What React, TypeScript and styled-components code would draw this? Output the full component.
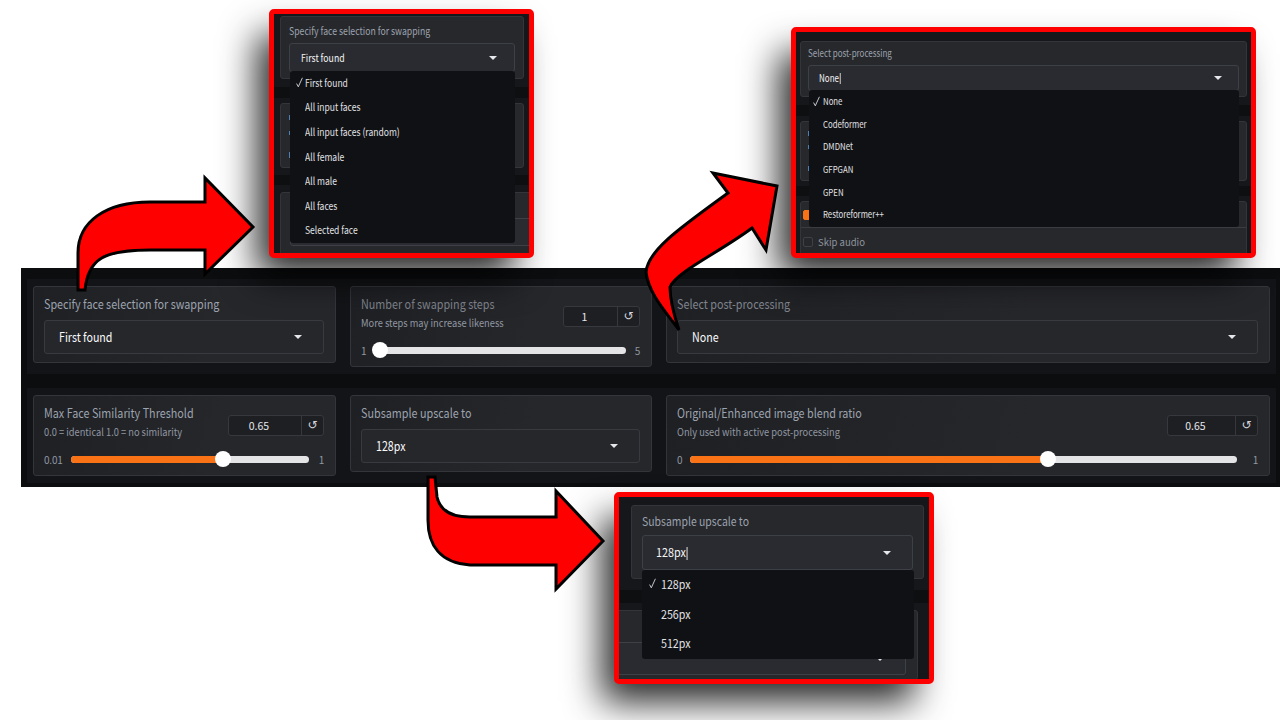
import React from 'react';
import styled, { createGlobalStyle } from 'styled-components';

const GlobalStyle = createGlobalStyle`
  html, body {
    margin: 0;
    padding: 0;
    background: #fff;
  }
  body {
    font-family: 'Noto Sans CJK SC', 'Noto Sans', sans-serif;
  }
`;

const ARROWS = [
  // left, swap selection
  'M78 290 L78 253 C78 222 105 202 150 202 L205 202 L205 178 L253 227 L205 274 L205 250 L150 250 C105 250 88 258 85 290 Z',
  // right, post-processing
  'M679 330 C664 310 648 292 646 272 C648 250 680 228 728 193 L713 173 L777 186 L766 250 L752 228 C720 252 676 272 670 287 C670 300 674 315 679 330 Z',
  // bottom, upscale
  'M428 477 L435 477 L437 497 C440 510 450 517 470 517 L556 517 L556 491 L603 541 L556 589 L556 565 L470 565 C440 563 428 545 428 520 Z',
];

const MenuOptions = ({ options, rowH, size, pl, slot, sx, pb }: {
  options: string[];
  rowH: number;
  size: number;
  pl: number;
  slot: number;
  sx: number;
  pb?: number;
}) => (
  <>
    {options.map((o, i) => (
      <MenuItem key={o} $rowH={rowH} $size={size} $pl={pl} $slot={slot} $pb={pb}>
        <span>
          {i === 0 && (
            <CheckIcon viewBox="0 0 7 11">
              <path d="M0.6 6.6 L2.3 9.8 L6.4 0.8" fill="none" stroke="#d8dade" strokeWidth="0.9" />
            </CheckIcon>
          )}
        </span>
        <Squeezed $sx={sx}>{o}</Squeezed>
      </MenuItem>
    ))}
  </>
);

const App = () => {
  return (
    <Page>
      <GlobalStyle />
      <Panel>
        <Band>
          <Card>
            <Label>Specify face selection for swapping</Label>
            <Select value="First found" />
          </Card>
          <SliderCard
            label="Number of swapping steps"
            hint="More steps may increase likeness"
            value="1"
            min="1"
            max="5"
            pct={2}
            boxWidth={77}
            trackEnd={1}
            dim
          />
          <Card>
            <Label $dim>Select post-processing</Label>
            <Select value="None" />
          </Card>
        </Band>
        <Band>
          <SliderCard
            label="Max Face Similarity Threshold"
            hint="0.0 = identical 1.0 = no similarity"
            value="0.65"
            min="0.01"
            max="1"
            pct={63.5}
            boxWidth={96}
            trackEnd={2}
          />
          <Card>
            <Label>Subsample upscale to</Label>
            <Select value="128px" />
          </Card>
          <SliderCard
            label="Original/Enhanced image blend ratio"
            hint="Only used with active post-processing"
            value="0.65"
            min="0"
            max="1"
            pct={65.3}
            boxWidth={91}
            trackEnd={8}
          />
        </Band>
      </Panel>

      <Callout $x={269} $y={9} $w={265} $h={249}>
        <PeekCard $mt={2} $h={63} $pad={8} $pt={5}>
          <PeekLabel $size={11} $sx={0.79}>Specify face selection for swapping</PeekLabel>
          <PeekSelect $size={11} $h={29} $mt={5} $pl={11}>
            <Squeezed $sx={0.79}>First found</Squeezed>
            <Caret $x={17} />
          </PeekSelect>
        </PeekCard>
        <PeekGap $mt={8} $h={11} />
        <PeekCard $mt={5} $h={65} $pad={9} $pt={5} />
        <PeekGap $mt={7} $h={10} />
        <PeekCard $mt={7} $h={70} $pad={9} $pt={5} $mr={-20}>
          <PeekLabel $size={11} $sx={0.79} />
          <PeekSelect $size={11} $h={28} $mt={4} $pl={11} />
        </PeekCard>
        <PeekTick $x={15} $y={101} $h={5} />
        <PeekTick $x={15} $y={117} $h={4} />
        <PeekTick $x={15} $y={138} $h={6} />
        <Menu $x={16} $y={57} $w={225} $h={172}>
          <MenuOptions
            options={['First found', 'All input faces', 'All input faces (random)', 'All female', 'All male', 'All faces', 'Selected face']}
            rowH={24.6}
            size={10.5}
            pl={6}
            slot={9}
            sx={0.815}
            pb={2}
          />
        </Menu>
      </Callout>

      <Callout $x={791} $y={27} $w={465} $h={231}>
        <PeekCard $mt={9} $h={56} $pad={7} $pt={3} $ml={4} $mr={4}>
          <PeekLabel $size={10} $sx={0.8}>Select post-processing</PeekLabel>
          <PeekSelect $size={10} $h={26} $mt={4} $pl={10}>
            <Squeezed $sx={0.8}>
              None
              <Cursor $h={11} />
            </Squeezed>
            <Caret $x={16} />
          </PeekSelect>
        </PeekCard>
        <PeekGap $mt={8} $h={11} />
        <PeekCard $mt={5} $h={60} $pad={8} $pt={5} $ml={4} $mr={4} />
        <PeekGap $mt={5} $h={10} />
        <PeekCard $mt={5} $h={60} $pad={0} $pt={0} $ml={4} $mr={4}>
          <CheckRow $h={25}>
            <CheckBox $on />
          </CheckRow>
          <CheckRow $h={27} $divided>
            <CheckBox />
            <CheckText>Skip audio</CheckText>
          </CheckRow>
        </PeekCard>
        <PeekTick $x={12} $y={99} $h={5} />
        <PeekTick $x={12} $y={113} $h={4} />
        <PeekTick $x={12} $y={134} $h={5} />
        <Menu $x={13} $y={58} $w={430} $h={137}>
          <MenuOptions
            options={['None', 'Codeformer', 'DMDNet', 'GFPGAN', 'GPEN', 'Restoreformer++']}
            rowH={22.6}
            size={9.5}
            pl={4}
            slot={10}
            sx={0.82}
          />
        </Menu>
      </Callout>

      <Callout $x={614} $y={492} $w={320} $h={192}>
        <PeekCard $mt={8} $h={74} $pad={10} $pt={7} $ml={12} $mr={5}>
          <PeekLabel $size={12} $sx={0.87}>Subsample upscale to</PeekLabel>
          <PeekSelect $size={12} $h={35} $mt={6} $pl={13}>
            <Squeezed $sx={0.9}>
              128px
              <Cursor $h={13} />
            </Squeezed>
            <Caret $x={21} />
          </PeekSelect>
        </PeekCard>
        <PeekGap $mt={11} $h={13} />
        <PeekCard $mt={7} $h={70} $pad={11} $pt={7} $ml={-14} $mr={11}>
          <PeekLabel $size={12} $sx={0.87} />
          <PeekSelect $size={12} $h={33} $mt={8} $pl={14}>
            <Caret $x={21} />
          </PeekSelect>
        </PeekCard>
        <Menu $x={23} $y={73} $w={272} $h={89}>
          <MenuOptions
            options={['128px', '256px', '512px']}
            rowH={29.7}
            size={11.5}
            pl={7}
            slot={12}
            sx={0.93}
            pb={2}
          />
        </Menu>
      </Callout>

      <ArrowLayer viewBox="0 0 1280 720">
        {ARROWS.map((d) => (
          <path key={d} d={d} fill="#ff0000" stroke="#000" strokeWidth="3" strokeLinejoin="miter" />
        ))}
      </ArrowLayer>
    </Page>
  );
};

const Select = ({ value }: { value: string }) => (
  <SelectBox>
    <Squeezed $sx={0.82}>{value}</Squeezed>
    <Caret $x={21} />
  </SelectBox>
);

type SliderCardProps = {
  label: string;
  hint: string;
  value: string;
  min: string;
  max: string;
  pct: number;
  boxWidth: number;
  trackEnd: number;
  dim?: boolean;
};

const SliderCard = ({ label, hint, value, min, max, pct, boxWidth, trackEnd, dim }: SliderCardProps) => (
  <Card>
    <SliderHead>
      <div>
        <Label $dim={dim}>{label}</Label>
        <Hint>{hint}</Hint>
      </div>
      <NumberBox $w={boxWidth}>
        <NumberValue>{value}</NumberValue>
        <ResetButton>↺</ResetButton>
      </NumberBox>
    </SliderHead>
    <SliderRow>
      <SliderEnd>{min}</SliderEnd>
      <Track $end={trackEnd}>
        {pct > 5 && <Fill style={{ width: `${pct}%` }} />}
        <Thumb style={{ left: `${pct}%` }} />
      </Track>
      <SliderEnd>{max}</SliderEnd>
    </SliderRow>
  </Card>
);

export default App;

const Page = styled.div`
  position: relative;
  width: 1280px;
  height: 720px;
  overflow: hidden;
  background: #fff;
  padding-top: 268px;
  box-sizing: border-box;
`;

const Panel = styled.div`
  display: flex;
  flex-direction: column;
  gap: 14px;
  box-sizing: border-box;
  width: 1259px;
  height: 219px;
  margin-left: 21px;
  padding: 11px 4px 0 6px;
  background: #0c0d0f;
`;

const Band = styled.div`
  display: grid;
  grid-template-columns: 303px 302px 604px;
  column-gap: 14px;
  align-items: start;
  height: 95px;
  box-sizing: border-box;
  padding: 7px 6px;
  background: #131417;
`;

const Card = styled.div`
  box-sizing: border-box;
  padding: 8px 11px 8px 10px;
  background: linear-gradient(105deg, #1f2024, #26272b 60%);
  border: 1px solid #33353b;
  border-radius: 3px;
`;

// the reference is a screenshot squeezed sideways, so the text is too
const Squeezed = styled.span<{ $sx: number }>`
  display: inline-block;
  white-space: nowrap;
  transform: scaleX(${(p) => p.$sx});
  transform-origin: left center;
`;

const Label = styled.div<{ $dim?: boolean }>`
  font-size: 13px;
  line-height: 18px;
  color: ${(p) => (p.$dim ? '#7f838c' : '#9ca3af')};
  white-space: nowrap;
  transform: scaleX(0.83);
  transform-origin: left center;
`;

const Hint = styled.div`
  font-size: 10.5px;
  line-height: 20px;
  color: #9097a1;
  white-space: nowrap;
  transform: scaleX(0.885);
  transform-origin: left center;
`;

const SelectBox = styled.div`
  position: relative;
  display: flex;
  align-items: center;
  box-sizing: border-box;
  height: 34px;
  margin-top: 7px;
  padding: 0 0 2px 14px;
  font-size: 13px;
  color: #f9fafb;
  background: #26272b;
  border: 1px solid #383a40;
  border-radius: 3px;
`;

const Caret = styled.span<{ $x: number }>`
  position: absolute;
  right: ${(p) => p.$x}px;
  top: 50%;
  margin-top: -2px;
  width: 0;
  height: 0;
  border-left: 4px solid transparent;
  border-right: 4px solid transparent;
  border-top: 4.5px solid #e5e7eb;
`;

const SliderHead = styled.div`
  display: flex;
  justify-content: space-between;
  align-items: flex-start;
`;

const NumberBox = styled.div<{ $w: number }>`
  display: flex;
  flex: none;
  box-sizing: border-box;
  width: ${(p) => p.$w}px;
  height: 21px;
  margin-top: 11px;
  background: #1e1f23;
  border: 1px solid #36383e;
  border-radius: 3px;
`;

const NumberValue = styled.div`
  flex: 1;
  padding-right: 12px;
  text-align: center;
  font-size: 10.5px;
  line-height: 19px;
  color: #e5e7eb;
`;

const ResetButton = styled.div`
  flex: none;
  width: 21px;
  text-align: center;
  font-family: 'DejaVu Sans', sans-serif;
  font-size: 12px;
  line-height: 19px;
  color: #d1d5db;
  border-left: 1px solid #36383e;
`;

const SliderRow = styled.div`
  display: flex;
  align-items: center;
  gap: 8px;
  height: 16px;
  margin-top: 9px;
`;

const SliderEnd = styled.span`
  flex: none;
  font-size: 10px;
  letter-spacing: -0.2px;
  color: #9097a1;
`;

const Track = styled.div<{ $end: number }>`
  position: relative;
  flex: 1;
  height: 7px;
  margin-right: ${(p) => p.$end}px;
  background: #e4e4e7;
  border-radius: 4px;
`;

const Fill = styled.div`
  height: 100%;
  background: #f97316;
  border-radius: 4px 0 0 4px;
`;

const Thumb = styled.div`
  position: absolute;
  top: 50%;
  width: 16px;
  height: 16px;
  margin: -8px 0 0 -7px;
  background: #fff;
  border-radius: 50%;
`;

const Callout = styled.div<{ $x: number; $y: number; $w: number; $h: number }>`
  position: absolute;
  left: ${(p) => p.$x}px;
  top: ${(p) => p.$y}px;
  width: ${(p) => p.$w}px;
  height: ${(p) => p.$h}px;
  box-sizing: border-box;
  display: flex;
  flex-direction: column;
  overflow: hidden;
  background: #16171a;
  border: 5px solid #ff0000;
  border-radius: 5px;
  box-shadow: -16px 22px 36px -4px rgba(0, 0, 0, 0.85);
`;

const PeekCard = styled.div<{ $mt: number; $h: number; $pad: number; $pt: number; $ml?: number; $mr?: number }>`
  flex: none;
  box-sizing: border-box;
  height: ${(p) => p.$h}px;
  margin: ${(p) => p.$mt}px ${(p) => p.$mr ?? 5}px 0 ${(p) => p.$ml ?? 6}px;
  padding: ${(p) => p.$pt}px ${(p) => p.$pad}px 0;
  background: #27282c;
  border: 1px solid #33353b;
  border-radius: 3px;
`;

const PeekLabel = styled.div<{ $size: number; $sx: number }>`
  font-size: ${(p) => p.$size}px;
  line-height: 16px;
  min-height: 16px;
  color: #9ca3af;
  white-space: nowrap;
  transform: scaleX(${(p) => p.$sx});
  transform-origin: left center;
`;

const PeekSelect = styled.div<{ $size: number; $h: number; $mt: number; $pl: number }>`
  position: relative;
  display: flex;
  align-items: center;
  box-sizing: border-box;
  height: ${(p) => p.$h}px;
  margin-top: ${(p) => p.$mt}px;
  padding: 0 0 2px ${(p) => p.$pl}px;
  font-size: ${(p) => p.$size}px;
  color: #f3f4f6;
  background: #2a2b30;
  border: 1px solid #3e4047;
  border-radius: 3px;
`;

const PeekGap = styled.div<{ $mt: number; $h: number }>`
  flex: none;
  height: ${(p) => p.$h}px;
  margin-top: ${(p) => p.$mt}px;
  background: #0e0f11;
`;

// sliver of the text that lies behind an open menu
const PeekTick = styled.span<{ $x: number; $y: number; $h: number }>`
  position: absolute;
  left: ${(p) => p.$x}px;
  top: ${(p) => p.$y}px;
  width: 1px;
  height: ${(p) => p.$h}px;
  background: #4d7fb5;
`;

const Cursor = styled.span<{ $h: number }>`
  display: inline-block;
  width: 1px;
  height: ${(p) => p.$h}px;
  margin-left: 1px;
  vertical-align: middle;
  background: #f3f4f6;
`;

const Menu = styled.div<{ $x: number; $y: number; $w: number; $h: number }>`
  position: absolute;
  left: ${(p) => p.$x}px;
  top: ${(p) => p.$y}px;
  width: ${(p) => p.$w}px;
  height: ${(p) => p.$h}px;
  background: #101114;
  border-radius: 3px;
`;

const MenuItem = styled.div<{ $rowH: number; $size: number; $pl: number; $slot: number; $pb?: number }>`
  display: grid;
  grid-template-columns: ${(p) => p.$slot}px 1fr;
  align-items: center;
  box-sizing: border-box;
  height: ${(p) => p.$rowH}px;
  padding-left: ${(p) => p.$pl}px;
  padding-bottom: ${(p) => p.$pb ?? 0}px;
  font-size: ${(p) => p.$size}px;
  color: #e0e2e6;
`;

const CheckIcon = styled.svg`
  display: block;
  width: 7px;
  height: 11px;
`;

const CheckRow = styled.div<{ $h: number; $divided?: boolean }>`
  display: flex;
  align-items: center;
  gap: 5px;
  height: ${(p) => p.$h}px;
  padding-left: 2px;
  border-top: ${(p) => (p.$divided ? '1px solid #3a3c42' : 'none')};
`;

const CheckBox = styled.span<{ $on?: boolean }>`
  flex: none;
  box-sizing: border-box;
  width: 10px;
  height: 10px;
  background: ${(p) => (p.$on ? '#f97316' : '#26272b')};
  border: 1px solid ${(p) => (p.$on ? '#f97316' : '#3e4047')};
  border-radius: 2px;
`;

const CheckText = styled.span`
  font-size: 9.5px;
  color: #8f949d;
`;

const ArrowLayer = styled.svg`
  position: absolute;
  left: 0;
  top: 0;
  width: 1280px;
  height: 720px;
  pointer-events: none;
`;
